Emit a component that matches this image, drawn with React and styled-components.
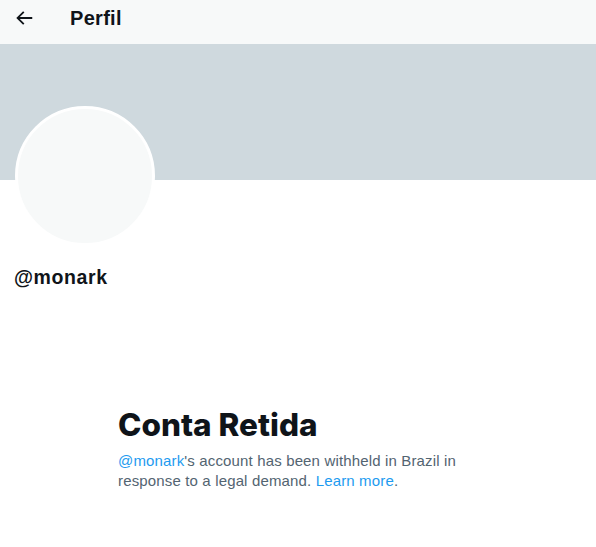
import React from 'react';
import styled, { createGlobalStyle } from 'styled-components';

const GlobalStyle = createGlobalStyle`
  body {
    margin: 0;
    background: #ffffff;
    font-family: 'Liberation Sans', Arial, sans-serif;
    color: #0f1419;
  }
`;

const Page = styled.div`
  width: 596px;
  min-height: 547px;
  background: #ffffff;
`;

const Header = styled.header`
  height: 44px;
  background: #f7f9f9;
  display: flex;
  align-items: center;
  padding: 0 13px 8px;
  gap: 35px;
  box-sizing: border-box;
`;

const BackButton = styled.button`
  border: 0;
  background: transparent;
  padding: 0;
  width: 22px;
  height: 22px;
  display: flex;
  align-items: center;
  justify-content: center;
  color: #0f1419;
`;

const HeaderTitle = styled.h2`
  margin: 0;
  font-size: 20px;
  font-weight: 700;
  letter-spacing: 0.3px;
`;

const Banner = styled.div`
  height: 136px;
  background: #cfd9de;
`;

const ProfileInfo = styled.div`
  padding: 0 14px;
`;

const Avatar = styled.div`
  width: 140px;
  height: 140px;
  margin-top: -74px;
  margin-left: 1px;
  border-radius: 50%;
  border: 3px solid #ffffff;
  box-sizing: border-box;
  background: #f7f9f9;
`;

const Handle = styled.div`
  margin-top: 19px;
  font-size: 19.5px;
  font-weight: 700;
  line-height: 24px;
  letter-spacing: 0.6px;
`;

const Notice = styled.section`
  margin: 118px 0 0 118px;
  width: 350px;
`;

const NoticeTitle = styled.h1`
  margin: 0 0 8px;
  font-family: 'Inter', 'Liberation Sans', sans-serif;
  font-size: 31.5px;
  font-weight: 800;
  line-height: 36px;
  letter-spacing: 0px;
`;

const NoticeText = styled.p`
  margin: 0;
  font-size: 15px;
  line-height: 20px;
  letter-spacing: 0.15px;
  color: #536471;
`;

const Link = styled.a`
  color: #1d9bf0;
  text-decoration: none;
`;

const ArrowLeft = () => (
  <svg width="22" height="22" viewBox="0 0 24 24" fill="currentColor">
    <path d="M7.414 13l5.043 5.04-1.414 1.42L3.586 12l7.457-7.46 1.414 1.42L7.414 11H21v2H7.414z" />
  </svg>
);

const App = () => (
  <Page>
    <GlobalStyle />
    <Header>
      <BackButton aria-label="Voltar"><ArrowLeft /></BackButton>
      <HeaderTitle>Perfil</HeaderTitle>
    </Header>
    <Banner />
    <ProfileInfo>
      <Avatar />
      <Handle>@monark</Handle>
    </ProfileInfo>
    <Notice>
      <NoticeTitle>Conta Retida</NoticeTitle>
      <NoticeText>
        <Link href="#">@monark</Link>'s account has been withheld in Brazil in response to a legal demand. <Link href="#">Learn more</Link>.
      </NoticeText>
    </Notice>
  </Page>
);

export default App;
